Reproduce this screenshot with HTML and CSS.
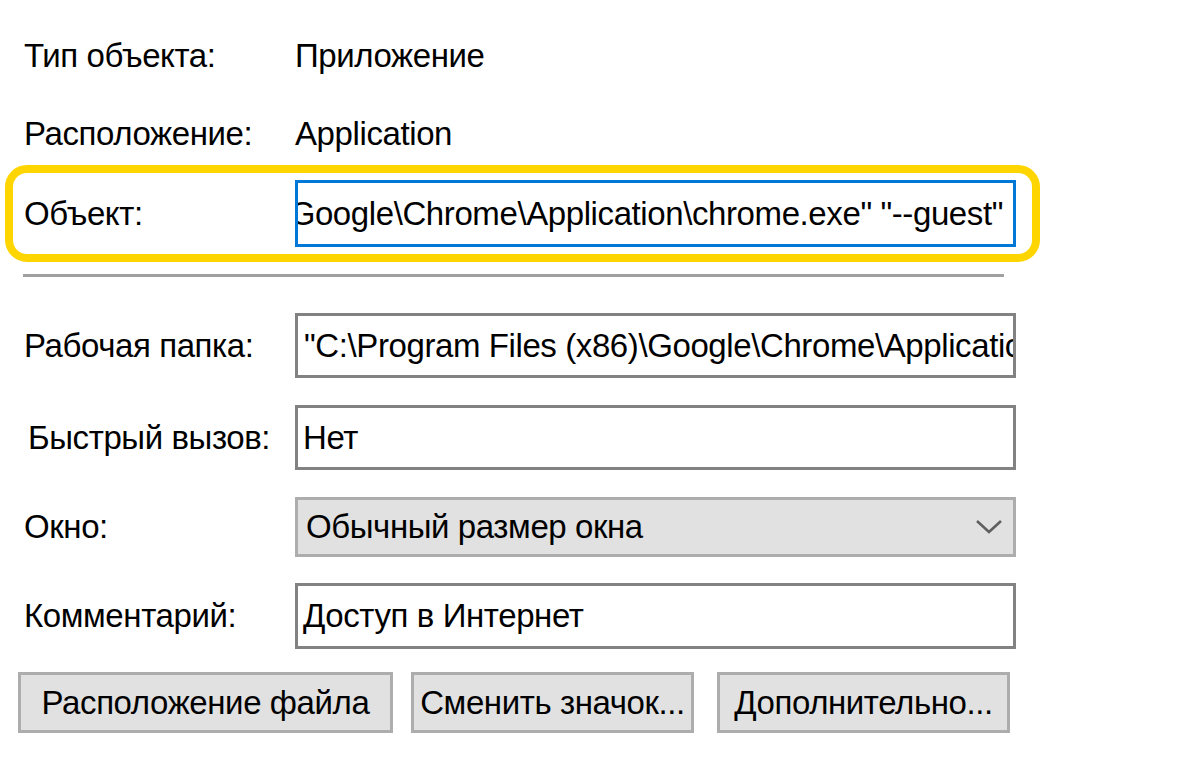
FILE: index.html
```
<!DOCTYPE html>
<html lang="ru">
  <head>
    <meta charset="UTF-8" />
    <meta name="viewport" content="width=device-width, initial-scale=1.0" />
    <title>Свойства: Google Chrome</title>
    <link rel="stylesheet" href="styles.css">
  </head>
  <body>
    <div class="dialog">
      <!-- общие сведения -->
      <div class="info-row first">
        <span class="label">Тип объекта:</span>
        <span class="value">Приложение</span>
      </div>
      <div class="info-row">
        <span class="label">Расположение:</span>
        <span class="value">Application</span>
      </div>

      <!-- выделенная строка -->
      <div class="highlight">
        <span class="label">Объект:</span>
        <div class="field field-target">
          <span class="field-text">"C:\Program Files (x86)\Google\Chrome\Application\chrome.exe" "--guest"</span>
        </div>
      </div>

      <div class="separator"></div>

      <div class="field-row row-workdir">
        <span class="label">Рабочая папка:</span>
        <div class="field">
          <span class="field-text">"C:\Program Files (x86)\Google\Chrome\Application"</span>
        </div>
      </div>
      <div class="field-row row-hotkey">
        <span class="label label-shift">Быстрый вызов:</span>
        <div class="field field-tight">
          <span class="field-text">Нет</span>
        </div>
      </div>
      <div class="field-row row-window">
        <span class="label">Окно:</span>
        <div class="field select">
          <span class="field-text">Обычный размер окна</span>
          <svg class="chevron" width="28" height="16" viewBox="0 0 28 16">
            <polyline points="2,2 14,13 26,2" fill="none" stroke="#5f5f5f" stroke-width="2.6" />
          </svg>
        </div>
      </div>
      <div class="field-row row-comment">
        <span class="label">Комментарий:</span>
        <div class="field field-tight">
          <span class="field-text">Доступ в Интернет</span>
        </div>
      </div>

      <div class="buttons">
        <div class="btn btn-location">Расположение файла</div>
        <div class="btn btn-icon">Сменить значок...</div>
        <div class="btn btn-more">Дополнительно...</div>
      </div>
    </div>
  </body>
</html>
```

FILE: styles.css
```
body {
  margin: 0;
  background-color: #ffffff;
  font-family: "Liberation Sans", Arial, sans-serif;
  font-size: 33px;
  letter-spacing: -0.4px;
  color: #000;
}

.dialog {
  width: 1045px;
}

.label {
  width: 271px;
  flex-shrink: 0;
  white-space: nowrap;
}

.label-shift {
  padding-left: 4px;
  width: 267px;
}

/* верхние строки */
.info-row {
  display: flex;
  align-items: center;
  height: 52px;
  margin-top: 26px;
  padding-left: 24px;
}

.info-row.first {
  margin-top: 30px;
}

/* выделение */
.highlight {
  display: flex;
  align-items: center;
  box-sizing: border-box;
  width: 1035px;
  height: 97px;
  margin: 5px 0 0 5px;
  padding-left: 11px;
  border: 8px solid #ffd500;
  border-radius: 22px;
}

.separator {
  width: 981px;
  height: 3px;
  margin: 12px 0 0 23px;
  background-color: #a0a0a0;
}

/* поля */
.field-row {
  display: flex;
  align-items: center;
  padding-left: 24px;
}

.field {
  display: flex;
  align-items: center;
  box-sizing: border-box;
  width: 721px;
  height: 65px;
  padding: 0 6px;
  border: 3px solid #828282;
  background-color: #fff;
  overflow: hidden;
  white-space: nowrap;
}

.field-tight {
  padding-left: 5px;
}

.field-target {
  height: 67px;
  justify-content: flex-end;
  padding-right: 10px;
  border: 3px solid #0078d7;
}

.field-text {
  flex-shrink: 0;
}

.row-workdir {
  margin-top: 36px;
}

.row-hotkey {
  margin-top: 27px;
}

.row-window {
  margin-top: 27px;
}

.row-comment {
  margin-top: 26px;
}

.row-comment .field {
  height: 66px;
}

.select {
  height: 60px;
  padding-left: 8px;
  padding-right: 10px;
  justify-content: space-between;
  background-color: #e1e1e1;
  border-color: #adadad;
}

.chevron {
  display: block;
}

/* кнопки */
.buttons {
  display: flex;
  margin-top: 23px;
  padding-left: 18px;
}

.btn {
  display: flex;
  align-items: center;
  justify-content: center;
  box-sizing: border-box;
  height: 61px;
  border: 3px solid #adadad;
  background-color: #e1e1e1;
  white-space: nowrap;
}

.btn-location {
  width: 375px;
}

.btn-icon {
  width: 283px;
  margin-left: 18px;
}

.btn-more {
  width: 293px;
  margin-left: 23px;
}
```
